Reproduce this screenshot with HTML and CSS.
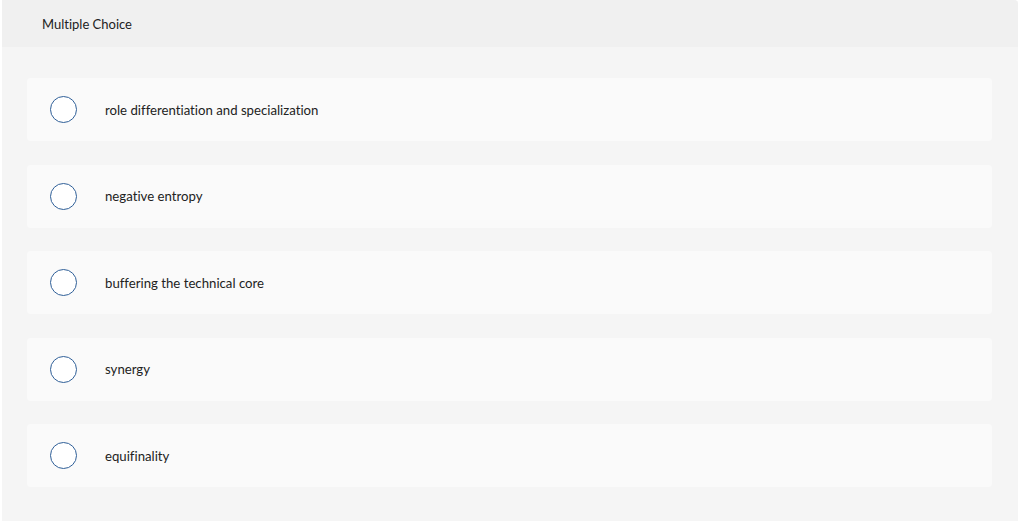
FILE: index.html
```html
<!DOCTYPE html>
<html lang="en">
<head>
  <meta charset="UTF-8">
  <title>Multiple Choice</title>
  <link rel="stylesheet" href="styles.css">
</head>
<body>
  <div class="question">
    <div class="question-header">Multiple Choice</div>

    <div class="choices">
      <label class="choice">
        <input type="radio" name="answer">
        <span class="radio"></span>
        <span class="choice-text">role differentiation and specialization</span>
      </label>
      <label class="choice">
        <input type="radio" name="answer">
        <span class="radio"></span>
        <span class="choice-text">negative entropy</span>
      </label>
      <label class="choice">
        <input type="radio" name="answer">
        <span class="radio"></span>
        <span class="choice-text">buffering the technical core</span>
      </label>
      <label class="choice">
        <input type="radio" name="answer">
        <span class="radio"></span>
        <span class="choice-text">synergy</span>
      </label>
      <label class="choice">
        <input type="radio" name="answer">
        <span class="radio"></span>
        <span class="choice-text">equifinality</span>
      </label>
    </div>
  </div>
</body>
</html>
```

FILE: styles.css
```css
html, body {
  height: 100%;
}
body {
  margin: 0;
  padding: 0;
  background: #ffffff;
  font-family: Lato, "Open Sans", Arial, sans-serif;
  font-variant-ligatures: none;
  color: #222;
}
.question {
  margin: 0 6px 0 2px;
  min-height: 100%;
  background: #f5f5f5;
  border-radius: 0 4px 0 0;
}
.question-header {
  height: 47px;
  line-height: 49px;
  padding-left: 40px;
  background: #f0f0f0;
  font-size: 13px;
  border-radius: 0 4px 0 0;
}
.choices {
  display: flex;
  flex-direction: column;
  gap: 23.5px;
  padding: 31px 26px 0 25px;
}
.choice {
  display: flex;
  align-items: center;
  height: 63px;
  background: #fafafa;
  border-radius: 4px;
  cursor: pointer;
}
.choice input[type="radio"] {
  display: none;
}
.radio {
  box-sizing: border-box;
  width: 27px;
  height: 27px;
  margin-left: 23px;
  border: 1.5px solid #2f5f98;
  border-radius: 50%;
  background: #fff;
  flex-shrink: 0;
}
.choice-text {
  margin-left: 28px;
  font-size: 13.2px;
}
```
